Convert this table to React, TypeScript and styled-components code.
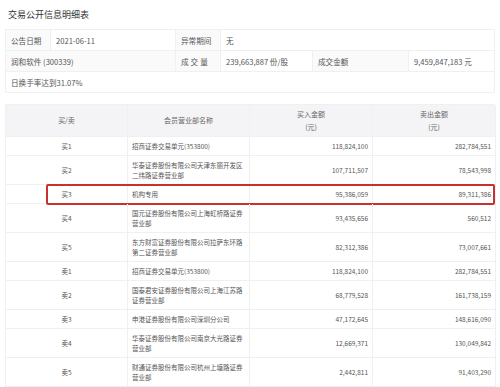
import React from 'react';
import styled, { createGlobalStyle } from 'styled-components';

const GlobalStyle = createGlobalStyle`
  body {
    margin: 0;
    background: #ffffff;
    font-family: "Noto Sans CJK SC", "Noto Sans", sans-serif;
  }
`;

const Page = styled.div`
  width: 500px;
  height: 387px;
  overflow: hidden;
  padding: 8px 5px 0;
  box-sizing: border-box;
`;

const Title = styled.div`
  font-size: 9px;
  line-height: 14px;
  color: #333;
  padding-left: 3px;
  margin-bottom: 7px;
`;

const InfoGrid = styled.div`
  display: grid;
  grid-template-columns: 45px 125px 45px 92px 96px 1fr;
  grid-auto-rows: 21px;
  border: 1px solid #eef0f2;
  border-right: none;
  border-bottom: none;
  margin-bottom: 11px;
`;

const InfoCell = styled.div<{ $span?: number; $label?: boolean; $spaced?: boolean }>`
  grid-column: span ${(p) => p.$span ?? 1};
  display: flex;
  align-items: center;
  padding-left: 5px;
  font-size: 7.6px;
  white-space: nowrap;
  color: #555;
  letter-spacing: ${(p) => (p.$spaced ? '2px' : '0')};
  background: ${(p) => (p.$label ? '#fafafb' : '#fff')};
  border-right: 1px solid #eef0f2;
  border-bottom: 1px solid #eef0f2;
`;

const Table = styled.div`
  border-left: 1px solid #eef0f2;
  border-top: 1px solid #eef0f2;
`;

const Row = styled.div<{ $tall?: boolean; $marked?: boolean }>`
  display: grid;
  grid-template-columns: 122px 122px 123px 123px;
  height: ${(p) => (p.$tall ? '29px' : '19px')};
  position: relative;

  &::after {
    content: '';
    display: ${(p) => (p.$marked ? 'block' : 'none')};
    position: absolute;
    left: 40px;
    right: 0;
    top: -1px;
    bottom: -1px;
    border: 2px solid #c8312c;
    border-radius: 2px;
  }
`;

const HeadRow = styled(Row)`
  height: 32px;
  background: #f4f4f6;
`;

const Cell = styled.div<{ $align?: 'left' | 'center' | 'right' }>`
  display: flex;
  flex-direction: column;
  justify-content: center;
  align-items: ${(p) =>
    p.$align === 'right' ? 'flex-end' : p.$align === 'left' ? 'flex-start' : 'center'};
  text-align: ${(p) => p.$align ?? 'center'};
  padding: 0 4px;
  font-size: 6.5px;
  line-height: 10px;
  white-space: nowrap;
  color: #555;
  border-right: 1px solid #eef0f2;
  border-bottom: 1px solid #eef0f2;
`;

const HeadCell = styled(Cell)`
  font-size: 7px;
  line-height: 13px;
  color: #666;
`;

type Trade = {
  side: string;
  branch: string[];
  buy: string;
  sell: string;
  marked?: boolean;
};

const trades: Trade[] = [
  { side: '买1', branch: ['招商证券交易单元(353800)'], buy: '118,824,100', sell: '282,784,551' },
  { side: '买2', branch: ['华泰证券股份有限公司天津东丽开发区', '二纬路证券营业部'], buy: '107,711,507', sell: '78,543,998' },
  { side: '买3', branch: ['机构专用'], buy: '95,386,059', sell: '89,311,386', marked: true },
  { side: '买4', branch: ['国元证券股份有限公司上海虹桥路证券', '营业部'], buy: '93,435,656', sell: '560,512' },
  { side: '买5', branch: ['东方财富证券股份有限公司拉萨东环路', '第二证券营业部'], buy: '82,312,386', sell: '73,007,661' },
  { side: '卖1', branch: ['招商证券交易单元(353800)'], buy: '118,824,100', sell: '282,784,551' },
  { side: '卖2', branch: ['国泰君安证券股份有限公司上海江苏路', '证券营业部'], buy: '68,779,528', sell: '161,738,159' },
  { side: '卖3', branch: ['申港证券股份有限公司深圳分公司'], buy: '47,172,645', sell: '148,616,090' },
  { side: '卖4', branch: ['华泰证券股份有限公司南京大光路证券', '营业部'], buy: '12,669,371', sell: '130,049,842' },
  { side: '卖5', branch: ['财通证券股份有限公司杭州上塘路证券', '营业部'], buy: '2,442,811', sell: '91,403,290' },
];

const App: React.FC = () => {
  return (
    <Page>
      <GlobalStyle />
      <Title>交易公开信息明细表</Title>

      <InfoGrid>
        <InfoCell $label>公告日期</InfoCell>
        <InfoCell>2021-06-11</InfoCell>
        <InfoCell $label>异常期间</InfoCell>
        <InfoCell $span={3}>无</InfoCell>

        <InfoCell $span={2} $label>润和软件 (300339)</InfoCell>
        <InfoCell $label $spaced>成交量</InfoCell>
        <InfoCell>239,663,887 份/股</InfoCell>
        <InfoCell $label>成交金额</InfoCell>
        <InfoCell>9,459,847,183 元</InfoCell>

        <InfoCell $span={6}>日换手率达到31.07%</InfoCell>
      </InfoGrid>

      <Table>
        <HeadRow>
          <HeadCell>买/卖</HeadCell>
          <HeadCell>会员营业部名称</HeadCell>
          <HeadCell>
            <span>买入金额</span>
            <span>(元)</span>
          </HeadCell>
          <HeadCell>
            <span>卖出金额</span>
            <span>(元)</span>
          </HeadCell>
        </HeadRow>
        {trades.map((t) => (
          <Row key={t.side} $tall={t.branch.length > 1} $marked={t.marked}>
            <Cell>{t.side}</Cell>
            <Cell $align="left">
              {t.branch.map((line) => (
                <span key={line}>{line}</span>
              ))}
            </Cell>
            <Cell $align="right">{t.buy}</Cell>
            <Cell $align="right">{t.sell}</Cell>
          </Row>
        ))}
      </Table>
    </Page>
  );
};

export default App;
